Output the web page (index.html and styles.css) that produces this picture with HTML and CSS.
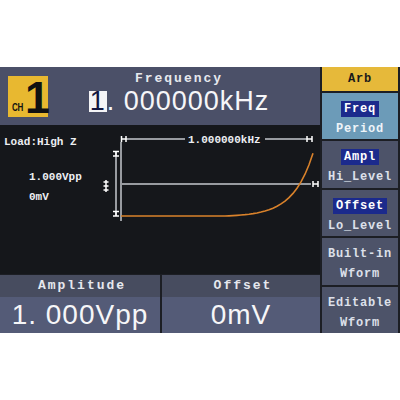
FILE: index.html
```html
<!DOCTYPE html>
<html>
<head>
<meta charset="utf-8">
<link rel="stylesheet" href="styles.css">
</head>
<body>
<div class="screen">
  <div class="main">
    <div class="header">
      <div class="badge"><span class="ch">CH</span><span class="num">1</span></div>
      <div class="freq">
        <div class="label">Frequency</div>
        <div class="value"><span class="cursor">1</span>. 000000kHz</div>
      </div>
    </div>
    <div class="graph">
      <svg width="320" height="149" viewBox="0 0 320 149">
        <g font-family="Liberation Mono, monospace" font-weight="bold" font-size="11" fill="#eceef2">
          <text x="4" y="20">Load:High Z</text>
          <text x="29" y="55">1.000Vpp</text>
          <text x="29" y="75">0mV</text>
          <text x="188" y="18">1.000000kHz</text>
        </g>
        <g stroke="#c4c8ce" stroke-width="1.5" fill="none">
          <line x1="126" y1="14" x2="185" y2="14"/>
          <line x1="265" y1="14" x2="307" y2="14"/>
          <line x1="121" y1="17" x2="121" y2="96"/>
          <line x1="116" y1="27" x2="116" y2="91"/>
          <line x1="122" y1="59" x2="311" y2="59"/>
        </g>
        <g stroke="#ffffff" stroke-width="1.5" fill="none">
          <path d="M121.5 11v6M126 11v6M121.5 14H126"/>
          <path d="M307 11v6M312 11v6M307 14h5"/>
          <path d="M313 56v6M318 56v6M313 59h5"/>
          <path d="M113 26.5h6M113 31h6M116 26.5V31"/>
          <path d="M113 86.5h6M113 91h6M116 86.5V91"/>
          <path d="M106 55v12M103.5 57h5M103.5 61h5M103.5 65h5"/>
        </g>
        <polyline fill="none" stroke="#d9822b" stroke-width="1.6"
          points="121,91 225,91 229,90.83 233,90.62 237,90.36 241,90.04 245,89.66 249,89.19 253,88.62 257,87.92 261,87.06 265,86.02 269,84.74 273,83.18 277,81.28 281,78.95 285,76.11 289,72.64 293,68.41 297,63.23 301,56.91 305,49.19 309,39.77 313,28.25"/>
      </svg>
    </div>
    <div class="params">
      <div class="param">
        <div class="plabel">Amplitude</div>
        <div class="pvalue">1. 000Vpp</div>
      </div>
      <div class="param">
        <div class="plabel">Offset</div>
        <div class="pvalue">0mV</div>
      </div>
    </div>
  </div>
  <div class="menu">
    <div class="menu-title">Arb</div>
    <div class="btn active"><span class="hl">Freq</span><span class="line">Period</span></div>
    <div class="btn"><span class="hl">Ampl</span><span class="line">Hi_Level</span></div>
    <div class="btn"><span class="hl">Offset</span><span class="line">Lo_Level</span></div>
    <div class="btn"><span class="line">Built-in</span><span class="line">Wform</span></div>
    <div class="btn"><span class="line">Editable</span><span class="line">Wform</span></div>
  </div>
</div>
</body>
</html>
```

FILE: styles.css
```css
html, body {
  margin: 0;
  padding: 0;
  background: #ffffff;
}

.screen {
  box-sizing: border-box;
  margin-top: 67px;
  width: 400px;
  height: 266px;
  display: grid;
  grid-template-columns: 320px 76px;
  column-gap: 2px;
  background: #1c1e24;
  border-right: 2px solid #1c1e24;
}

.main {
  display: flex;
  flex-direction: column;
  min-height: 0;
}

.header {
  height: 58px;
  flex: none;
  background: #4b5068;
  display: flex;
  align-items: flex-start;
}

.badge {
  margin: 9px 0 0 8px;
  width: 40px;
  height: 41px;
  flex: none;
  box-sizing: border-box;
  background: #e8b830;
  display: flex;
  align-items: flex-end;
  padding: 0 0 3px 4px;
  color: #111111;
  font-family: "Liberation Sans", Arial, sans-serif;
  font-weight: bold;
}

.ch {
  font-size: 10px;
  line-height: 8px;
  margin-bottom: 2px;
  letter-spacing: -0.5px;
  transform: scaleX(0.8);
  transform-origin: left bottom;
  width: 12px;
}

.num {
  font-size: 45px;
  line-height: 32px;
  margin-left: 1px;
}

.freq {
  flex: 1;
  display: flex;
  flex-direction: column;
  align-items: center;
  padding: 4px 10px 0 0;
}

.label, .plabel {
  font-family: "Liberation Mono", "DejaVu Sans Mono", monospace;
  font-weight: bold;
  font-size: 13px;
  letter-spacing: 2px;
  color: #e6e8ee;
}

.label {
  line-height: 16px;
}

.value {
  font-family: "Liberation Sans", Arial, sans-serif;
  font-size: 27px;
  line-height: 28px;
  letter-spacing: 1px;
  color: #f6f6f8;
  white-space: pre;
}

.cursor {
  display: inline-block;
  height: 21px;
  line-height: 21px;
  padding: 0 2px 0 1px;
  background: #f4f4f6;
  color: #121640;
  letter-spacing: 0;
}

.graph {
  height: 149px;
  flex: none;
  background: #15171b;
}

.graph svg {
  display: block;
}

.params {
  flex: 1;
  display: grid;
  grid-template-columns: 160px 158px;
  column-gap: 2px;
  padding-top: 1px;
}

.param {
  display: flex;
  flex-direction: column;
}

.plabel {
  height: 22px;
  line-height: 22px;
  text-align: center;
  background: #474c5f;
  padding-left: 4px;
}

.pvalue {
  flex: 1;
  background: #545b77;
  font-family: "Liberation Sans", Arial, sans-serif;
  font-size: 28px;
  line-height: 36px;
  letter-spacing: 1px;
  color: #f6f6f8;
  text-align: center;
  white-space: pre;
}

.menu {
  display: flex;
  flex-direction: column;
  gap: 2px;
  font-family: "Liberation Mono", "DejaVu Sans Mono", monospace;
  font-weight: bold;
  font-size: 12px;
  letter-spacing: 0.8px;
}

.menu-title {
  height: 24px;
  flex: none;
  background: #e6b93a;
  color: #1a1a1a;
  text-align: center;
  line-height: 24px;
}

.btn {
  flex: 1;
  background: #4d5369;
  color: #dde0ea;
  display: flex;
  flex-direction: column;
  align-items: center;
  padding-top: 6px;
  box-sizing: border-box;
}

.btn.active {
  background: #6c9bb8;
  color: #eef4f8;
}

.line {
  line-height: 20px;
}

.hl {
  display: inline-block;
  margin: 2px 0;
  line-height: 16px;
  padding: 0 3px;
  background: #1b2a8c;
  color: #ffffff;
}
```
